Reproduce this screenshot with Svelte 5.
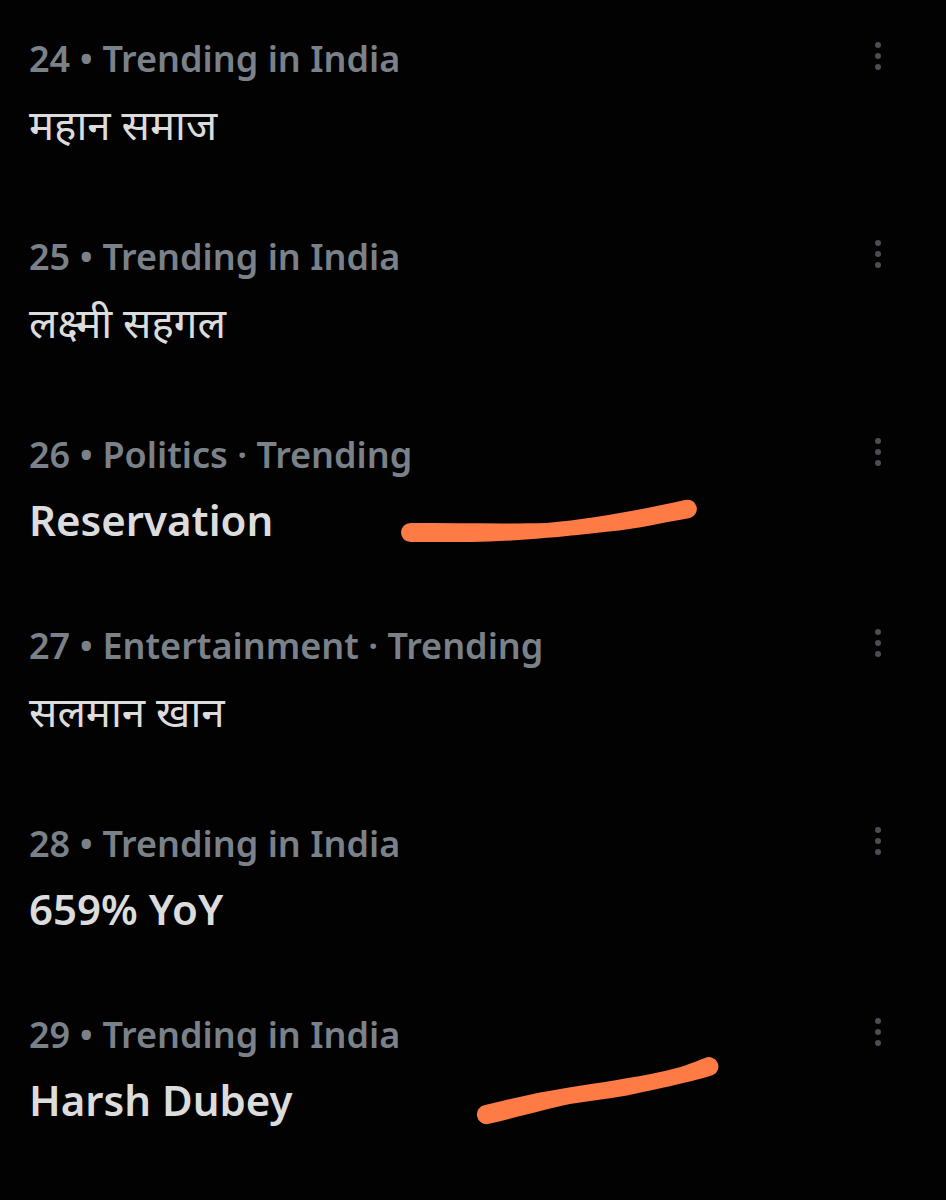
<script>
  const trends = [
    { rank: 24, context: 'Trending in India', name: 'महान समाज', hindi: true },
    { rank: 25, context: 'Trending in India', name: 'लक्ष्मी सहगल', hindi: true },
    { rank: 26, context: 'Politics · Trending', name: 'Reservation', mark: 'curve' },
    { rank: 27, context: 'Entertainment · Trending', name: 'सलमान खान', hindi: true },
    { rank: 28, context: 'Trending in India', name: '659% YoY' },
    { rank: 29, context: 'Trending in India', name: 'Harsh Dubey', mark: 'slope' }
  ];
</script>

<main>
  <ul>
    {#each trends as trend (trend.rank)}
      <li class="trend">
        <div class="body">
          <p class="context">{trend.rank} • {trend.context}</p>
          <h2 class:hindi={trend.hindi} lang={trend.hindi ? 'hi' : 'en'}>{trend.name}</h2>
        </div>

        <button type="button" class="more" aria-label="More options for {trend.name}">
          <svg viewBox="0 0 8 30" width="8" height="30">
            <circle cx="4" cy="4" r="3" />
            <circle cx="4" cy="15" r="3" />
            <circle cx="4" cy="26" r="3" />
          </svg>
        </button>

        <!-- Marker strokes, slightly thinner in the middle -->
        {#if trend.mark === 'curve'}
          <svg class="mark curve" viewBox="0 0 296 44" aria-hidden="true">
            <path d="M9.5 24C55 24 105 25 145 24C190 20 234 12 284 1A9 9 0 0 1 289 19C260 24 236 30 208 32.5C180 36 110 43 70 43H9.5A9.5 9.5 0 0 1 9.5 24Z" />
          </svg>
        {:else if trend.mark === 'slope'}
          <svg class="mark slope" viewBox="0 0 244 70" aria-hidden="true">
            <path d="M9 49C38 42 64 36 90 32C128 26 156 22 184 16C204 12 216 7 229 2A9 9 0 0 1 237 19C222 24 196 30 151 39.5C130 43 112 45 94 48C70 53 42 61 12 68A9.5 9.5 0 0 1 9 49Z" />
          </svg>
        {/if}
      </li>
    {/each}
  </ul>
</main>

<style>
  :global(body) {
    margin: 0;
    background: #020202;
  }

  main {
    min-height: 100vh;
    padding-top: 33px;
    box-sizing: border-box;
    color: #dcdcdc;
    font-family: "Noto Sans", "Open Sans", sans-serif;
  }

  ul {
    list-style: none;
    margin: 0;
    padding: 0;
  }

  .trend {
    position: relative;
    display: flex;
    justify-content: space-between;
    align-items: flex-start;
    padding: 0 56px 69px 29px;
  }

  .trend:last-child {
    padding-bottom: 0;
  }

  .context {
    margin: 0 0 8px;
    color: #7b8189;
    font-size: 36px;
    font-weight: 600;
    line-height: 52px;
  }

  h2 {
    margin: 0;
    font-size: 42px;
    font-weight: 600;
    line-height: 62px;
  }

  .hindi {
    padding-bottom: 7px;
    font-weight: 400;
  }

  .more {
    display: flex;
    margin: 8px 0 0;
    padding: 0 8px;
    border: 0;
    background: none;
    color: #4b4e52;
    cursor: pointer;
  }

  .more svg {
    fill: currentColor;
  }

  .mark {
    position: absolute;
    fill: #ff7b46;
    pointer-events: none;
  }

  .curve {
    top: 70px;
    left: 401px;
    width: 296px;
  }

  .slope {
    top: 47px;
    left: 476px;
    width: 244px;
  }
</style>
